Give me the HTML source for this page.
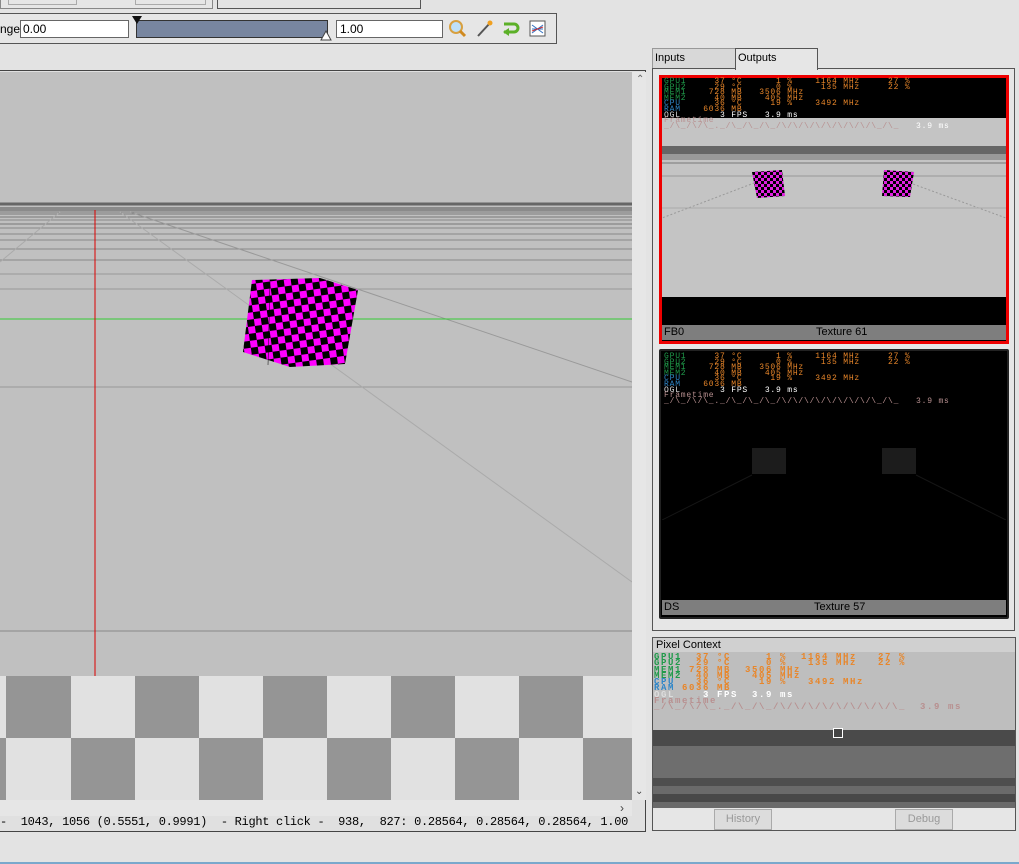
<!DOCTYPE html>
<html><head><meta charset="utf-8"><style>
*{margin:0;padding:0;box-sizing:border-box}
body{width:1019px;height:864px;overflow:hidden;background:#e3e3e3;font-family:"Liberation Sans",sans-serif;font-size:12px;position:relative}
.a{position:absolute}
.ov{position:absolute;font-family:"Liberation Mono",monospace;font-size:8px;line-height:5.6px;white-space:pre;letter-spacing:0.8px}
.g{color:#1f9a4a}.o{color:#e8862a}.b{color:#2f86c8}.w{color:#fff}.p{color:#b89090}
.lbl{position:absolute;background:#7e7e7e;height:15px;font-size:11px;line-height:15px;color:#000}
</style></head><body>
<div class="a" style="left:0;top:0;width:213px;height:9px;border:1px solid #888;border-top:none;background:#e6e6e6"></div>
<div class="a" style="left:8px;top:0;width:69px;height:5px;border:1px solid #aaa;border-top:none"></div>
<div class="a" style="left:135px;top:0;width:71px;height:5px;border:1px solid #aaa;border-top:none"></div>
<div class="a" style="left:217px;top:0;width:204px;height:9px;border:1px solid #555;border-top:none"></div>
<div class="a" style="left:-2px;top:13px;width:559px;height:31px;border:1px solid #555;background:#e6e6e6"></div>
<div class="a" style="left:0;top:22px;font-size:12px">nge</div>
<div class="a" style="left:20px;top:20px;width:109px;height:18px;border:1px solid #666;background:#fff;font-size:12px;line-height:16px;padding-left:2px">0.00</div>
<div class="a" style="left:136px;top:20px;width:192px;height:18px;background:#7886a0;border:1px solid #333"></div>
<svg class="a" style="left:131px;top:15px" width="12" height="12"><polygon points="1,1 11,1 6,9" fill="#111"/></svg>
<svg class="a" style="left:320px;top:30px" width="12" height="11"><polygon points="1,10 11,10 6,1" fill="#fff" stroke="#444"/></svg>
<div class="a" style="left:336px;top:20px;width:107px;height:18px;border:1px solid #666;background:#fff;font-size:12px;line-height:16px;padding-left:3px">1.00</div>
<svg class="a" style="left:448px;top:19px" width="100" height="20">
<circle cx="8" cy="8" r="6" fill="#bfe0f8" stroke="#d8a040" stroke-width="2"/><line x1="12" y1="12" x2="17" y2="17" stroke="#d08a20" stroke-width="3"/>
<line x1="30" y1="17" x2="42" y2="4" stroke="#555" stroke-width="2"/><circle cx="42" cy="4" r="2.5" fill="#f0a020"/>
<path d="M56 5 h10 a4 4 0 0 1 0 8 h-10" fill="none" stroke="#5cb028" stroke-width="3"/><polygon points="55,13 61,9 61,17" fill="#5cb028"/>
<rect x="82" y="2" width="15" height="15" fill="#fff" stroke="#555"/><path d="M84 6 l11 8 M84 14 l11-8 M84 10 h11" stroke="#3070c0" stroke-width="1"/><path d="M84 12 l11-4" stroke="#d03030"/>
</svg>
<div class="a" style="left:0;top:70px;width:646px;height:762px;border:1px solid #444;border-left:none;background:#e0e0e0"></div>
<svg class="a" style="left:0;top:72px" width="632" height="728">
<defs><pattern id="ck" width="14" height="14" patternUnits="userSpaceOnUse" patternTransform="rotate(-8)"><rect width="14" height="14" fill="#f0f"/><rect width="7" height="7" fill="#000"/><rect x="7" y="7" width="7" height="7" fill="#000"/></pattern>
<pattern id="ck2" width="6" height="6" patternUnits="userSpaceOnUse"><rect width="6" height="6" fill="#e020e0"/><rect width="3" height="3" fill="#000"/><rect x="3" y="3" width="3" height="3" fill="#000"/></pattern></defs>
<rect width="632" height="728" fill="#c0c0c0"/>
<g stroke="#555" stroke-width="1">
<line x1="0" y1="132" x2="632" y2="132" stroke="#666" stroke-width="3"/>
<line x1="0" y1="136" x2="632" y2="136"/><line x1="0" y1="138" x2="632" y2="138"/><line x1="0" y1="140" x2="632" y2="140" stroke="#777"/>
<line x1="0" y1="142" x2="632" y2="142" stroke="#777"/><line x1="0" y1="145" x2="632" y2="145" stroke="#777"/><line x1="0" y1="148" x2="632" y2="148" stroke="#888"/>
<line x1="0" y1="152" x2="632" y2="152" stroke="#777"/><line x1="0" y1="156" x2="632" y2="156" stroke="#888"/><line x1="0" y1="162" x2="632" y2="162" stroke="#888"/>
<line x1="0" y1="168" x2="632" y2="168" stroke="#888"/><line x1="0" y1="177" x2="632" y2="177" stroke="#888"/><line x1="0" y1="188" x2="632" y2="188" stroke="#888"/>
<line x1="0" y1="202" x2="632" y2="202" stroke="#999"/><line x1="0" y1="217" x2="632" y2="217" stroke="#999"/><line x1="0" y1="315" x2="632" y2="315" stroke="#999"/>
<line x1="0" y1="559" x2="632" y2="559" stroke="#888"/>
<line x1="130" y1="140" x2="632" y2="310" stroke="#999"/><line x1="120" y1="140" x2="632" y2="510" stroke="#aaa"/>
<line x1="0" y1="190" x2="60" y2="140" stroke="#aaa"/>
</g>
<line x1="0" y1="247" x2="632" y2="247" stroke="#3c3" stroke-width="1"/>
<line x1="95" y1="138" x2="95" y2="604" stroke="#d00" stroke-width="1"/>
<polygon points="252,208 320,206 358,218 345,292 290,295 243,280" fill="url(#ck)"/>
<line x1="270" y1="210" x2="268" y2="293" stroke="#000" stroke-width="0.5"/>
<rect x="0" y="604" width="632" height="124" fill="#959595"/>
<g fill="#e1e1e1">
<rect x="0" y="604" width="6" height="62"/><rect x="71" y="604" width="64" height="62"/><rect x="199" y="604" width="64" height="62"/><rect x="327" y="604" width="64" height="62"/><rect x="455" y="604" width="64" height="62"/><rect x="583" y="604" width="49" height="62"/>
<rect x="6" y="666" width="65" height="62"/><rect x="135" y="666" width="64" height="62"/><rect x="263" y="666" width="64" height="62"/><rect x="391" y="666" width="64" height="62"/><rect x="519" y="666" width="64" height="62"/>
</g>
</svg>
<div class="a" style="left:632px;top:72px;width:14px;height:728px;background:#e6e6e6"></div>
<div class="a" style="left:636px;top:74px;font-size:10px;color:#666">⌃</div>
<div class="a" style="left:635px;top:786px;font-size:10px;color:#444">⌄</div>
<div class="a" style="left:0;top:800px;width:632px;height:16px;background:#e6e6e6"></div>
<div class="a" style="left:620px;top:801px;font-size:12px;color:#444">›</div>
<div class="a" style="left:0;top:815px;font-family:'Liberation Mono',monospace;font-size:12px;white-space:pre;letter-spacing:-0.3px">-  1043, 1056 (0.5551, 0.9991)  - Right click -  938,  827: 0.28564, 0.28564, 0.28564, 1.00</div>
<div class="a" style="left:652px;top:48px;width:84px;height:21px;border:1px solid #999;border-bottom:none;background:#d8d8d8;padding:3px 2px;font-size:11px">Inputs</div>
<div class="a" style="left:735px;top:48px;width:83px;height:22px;border:1px solid #555;border-bottom:none;background:#e6e6e6;padding:3px 2px;font-size:11px;z-index:2">Outputs</div>
<div class="a" style="left:652px;top:68px;width:363px;height:563px;border:1px solid #555;background:#e6e6e6"></div>
<div class="a" style="left:659px;top:75px;width:350px;height:269px;border:3px solid #e00;background:#000"></div>
<div class="a" style="left:662px;top:118px;width:344px;height:179px;background:#c4c4c4"></div>
<svg class="a" style="left:662px;top:118px" width="344" height="179">
<rect x="0" y="28" width="344" height="8" fill="#666"/><rect x="0" y="36" width="344" height="6" fill="#999"/>
<line x1="0" y1="45" x2="344" y2="45" stroke="#777"/><line x1="0" y1="58" x2="344" y2="58" stroke="#999"/>
<line x1="100" y1="62" x2="0" y2="100" stroke="#999" stroke-dasharray="2 2"/><line x1="240" y1="62" x2="344" y2="100" stroke="#999" stroke-dasharray="2 2"/>
<line x1="0" y1="90" x2="344" y2="90" stroke="#aaa"/>
<polygon points="90,54 120,52 123,78 95,80" fill="url(#ck2)"/>
<polygon points="222,52 252,54 248,79 220,78" fill="url(#ck2)"/>
</svg>
<div class="ov" style="left:664px;top:79px"><span class="g">GPU1</span><span class="o">     37 °C      1 %    1164 MHz     27 %</span>
<span class="g">GPU2</span><span class="o">     29 °C      0 %     135 MHz     22 %</span>
<span class="g">MEM1</span><span class="o">    728 MB   3506 MHz</span>
<span class="g">MEM2</span><span class="o">     40 MB    405 MHz</span>
<span class="b">CPU </span><span class="o">     36 °C     19 %    3492 MHz</span>
<span class="b">RAM </span><span class="o">   6036 MB</span>
<span style="color:#ddd">OGL </span><span class="w">      3 FPS   3.9 ms</span>
<span class="p">Frametime</span>
<span class="p">_/\_/\/\_._/\_/\_/\_/\/\/\/\/\/\/\/\/\_/\_</span><span class="w">   3.9 ms</span></div>
<div class="lbl" style="left:662px;top:325px;width:344px;padding-left:2px">FB0<span style="position:absolute;left:154px">Texture 61</span></div>
<div class="a" style="left:659px;top:349px;width:350px;height:270px;border:2px solid #222;background:#000;border-radius:2px"></div>
<svg class="a" style="left:662px;top:440px" width="344" height="80"><rect x="90" y="8" width="34" height="26" fill="#1c1c1c"/><rect x="220" y="8" width="34" height="26" fill="#1c1c1c"/><line x1="90" y1="35" x2="0" y2="80" stroke="#151515"/><line x1="254" y1="35" x2="344" y2="80" stroke="#151515"/></svg>
<div class="ov" style="left:664px;top:354px"><span class="g">GPU1</span><span class="o">     37 °C      1 %    1164 MHz     27 %</span>
<span class="g">GPU2</span><span class="o">     29 °C      0 %     135 MHz     22 %</span>
<span class="g">MEM1</span><span class="o">    728 MB   3506 MHz</span>
<span class="g">MEM2</span><span class="o">     40 MB    405 MHz</span>
<span class="b">CPU </span><span class="o">     36 °C     19 %    3492 MHz</span>
<span class="b">RAM </span><span class="o">   6036 MB</span>
<span style="color:#ddd">OGL </span><span class="w">      3 FPS   3.9 ms</span>
<span class="p">Frametime</span>
<span class="p">_/\_/\/\_._/\_/\_/\_/\/\/\/\/\/\/\/\/\_/\_</span><span class="p">   3.9 ms</span></div>
<div class="lbl" style="left:662px;top:600px;width:344px;padding-left:2px">DS<span style="position:absolute;left:152px">Texture 57</span></div>
<div class="a" style="left:652px;top:637px;width:364px;height:194px;border:1px solid #555;background:#e6e6e6"></div>
<div class="a" style="left:653px;top:638px;width:362px;height:14px;background:#d0d0d0;font-size:11px;padding-left:3px;line-height:14px">Pixel Context</div>
<div class="a" style="left:653px;top:652px;width:362px;height:78px;background:#bebebe"></div>
<div class="ov" style="left:654px;top:654px;font-size:9px;line-height:6.3px;font-weight:bold;letter-spacing:1.6px"><span class="g">GPU1</span><span class="o">  37 °C     1 %  1164 MHz   27 %</span>
<span class="g">GPU2</span><span class="o">  29 °C     0 %   135 MHz   22 %</span>
<span class="g">MEM1</span><span class="o"> 728 MB  3506 MHz</span>
<span class="g">MEM2</span><span class="o">  40 MB   405 MHz</span>
<span class="b">CPU </span><span class="o">  36 °C    19 %   3492 MHz</span>
<span class="b">RAM </span><span class="o">6036 MB</span>
<span style="color:#ddd">OGL </span><span class="w">   3 FPS  3.9 ms</span>
<span class="p">Frametime</span>
<span class="p">_/\_/\/\_._/\_/\_/\/\/\/\/\/\/\/\/\_</span><span class="p">  3.9 ms</span></div>
<div class="a" style="left:653px;top:730px;width:362px;height:16px;background:#4a4a4a"></div>
<div class="a" style="left:653px;top:746px;width:362px;height:32px;background:#6e6e6e"></div>
<div class="a" style="left:653px;top:778px;width:362px;height:8px;background:#4e4e4e"></div>
<div class="a" style="left:653px;top:786px;width:362px;height:8px;background:#6a6a6a"></div>
<div class="a" style="left:653px;top:794px;width:362px;height:8px;background:#484848"></div>
<div class="a" style="left:653px;top:802px;width:362px;height:6px;background:#6a6a6a"></div>
<div class="a" style="left:833px;top:728px;width:10px;height:10px;border:1px solid #fff;background:#444"></div>
<div class="a" style="left:714px;top:809px;width:58px;height:21px;border:1px solid #aaa;background:#dcdcdc;color:#999;font-size:11px;text-align:center;line-height:19px">History</div>
<div class="a" style="left:895px;top:809px;width:58px;height:21px;border:1px solid #aaa;background:#dcdcdc;color:#999;font-size:11px;text-align:center;line-height:19px">Debug</div>
<div class="a" style="left:0;top:862px;width:1019px;height:2px;background:#7aa8cc"></div>
</body></html>
